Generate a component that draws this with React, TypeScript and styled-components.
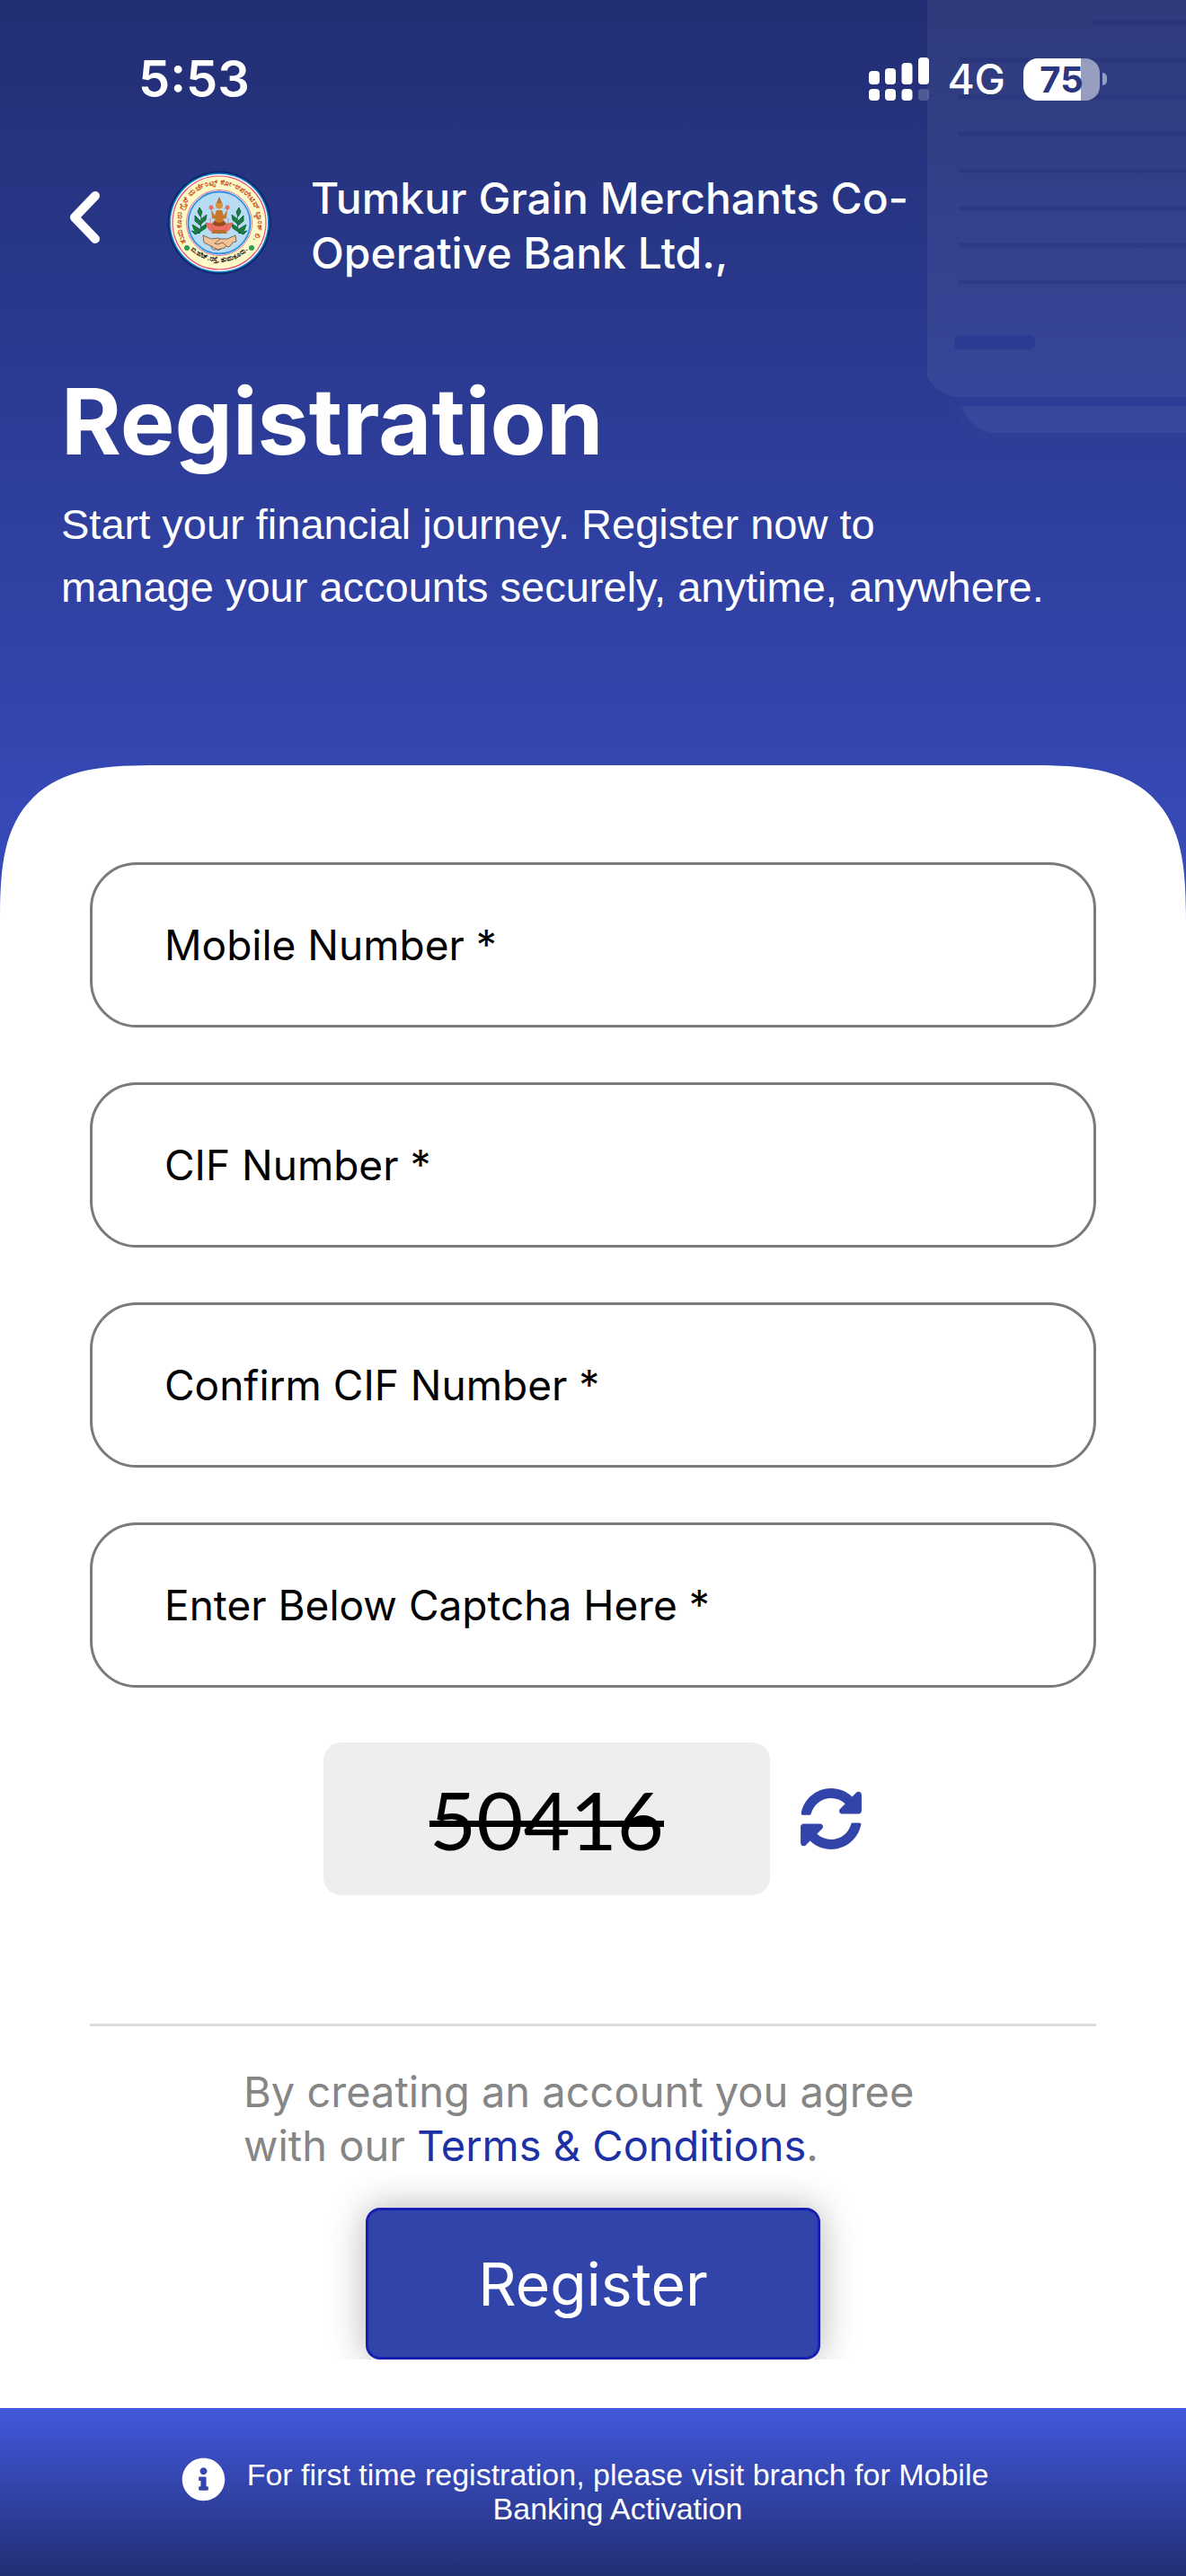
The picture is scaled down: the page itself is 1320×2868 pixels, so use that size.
import { useState } from "react";
import styled, { createGlobalStyle } from "styled-components";
import { FaInfoCircle, FaSyncAlt } from "react-icons/fa";

const GlobalStyle = createGlobalStyle`
    * {
        box-sizing: border-box;
    }
    body {
        margin: 0;
        font-family: Inter, "Noto Sans", sans-serif;
    }
`;
const Page = styled.div`
    position: relative;
    min-height: 100vh;
    display: flex;
    flex-direction: column;
    background: linear-gradient(#222e73, #4158dc 50%);
    overflow: hidden;
`;
const Papers = styled.svg`
    position: absolute;
    top: 0;
    right: 0;
    width: 288px;
    height: 500px;
`;
const StatusBar = styled.div`
    position: relative;
    height: 176px;
    padding: 0 88px 0 154px;
    display: flex;
    align-items: center;
    justify-content: space-between;
    color: white;
`;
const Time = styled.span`
    font-size: 56px;
    font-weight: 600;
`;
const StatusIcons = styled.div`
    display: flex;
    align-items: center;
    gap: 20px;
`;
const Network = styled.span`
    font-size: 46px;
    font-weight: 500;
`;
const Battery = styled.div`
    display: flex;
    align-items: center;
    gap: 3px;
`;
const BatteryBody = styled.div<{ $level: number }>`
    width: 85px;
    height: 47px;
    border-radius: 16px;
    background: linear-gradient(90deg, white ${(props) => props.$level}%, rgba(255, 255, 255, 0.5) ${(props) => props.$level}%);
    color: #2b377e;
    font-size: 40px;
    font-weight: 700;
    line-height: 47px;
    text-align: center;
`;
const BatteryTip = styled.div`
    width: 5px;
    height: 14px;
    border-radius: 0 7px 7px 0;
    background: rgba(255, 255, 255, 0.5);
`;
const Header = styled.header`
    position: relative;
    display: flex;
    align-items: flex-start;
    padding: 14px 68px 0;
`;
const BackButton = styled.button`
    width: 52px;
    height: 104px;
    padding: 0;
    border: none;
    background: none;
    color: white;
    display: flex;
    align-items: center;
    justify-content: center;
`;
const Logo = styled.svg`
    width: 116px;
    height: 116px;
    margin: 0 44px 0 66px;
    flex-shrink: 0;
`;
const BankName = styled.p`
    max-width: 700px;
    margin: 0;
    color: white;
    font-size: 48px;
    font-weight: 500;
    line-height: 61px;
`;
const Intro = styled.section`
    position: relative;
    padding: 93px 68px 163px;
    color: white;
`;
const Title = styled.h1`
    margin: 0 0 16px;
    font-size: 102px;
    font-weight: 700;
    line-height: 128px;
`;
const Subtitle = styled.p`
    max-width: 1120px;
    margin: 0;
    font-family: "Liberation Sans", Arial, sans-serif;
    font-size: 47px;
    line-height: 70px;
`;
const Card = styled.main`
    position: relative;
    flex: 1;
    padding: 108px 100px 54px;
    background: white;
    border-radius: 116px 116px 0 0;
    @supports (corner-shape: squircle) {
        border-radius: 178px 178px 0 0;
        corner-shape: superellipse(1.6);
    }
`;
const Form = styled.form`
    display: flex;
    flex-direction: column;
    gap: 61px;
`;
const Field = styled.div`
    display: grid;
    align-items: center;
`;
const Label = styled.label<{ $hidden: boolean }>`
    grid-area: 1 / 1;
    justify-self: start;
    z-index: 1;
    padding-left: 83px;
    color: black;
    font-size: 46px;
    line-height: 60px;
    pointer-events: none;
    opacity: ${(props) => (props.$hidden ? 0 : 1)};
`;
const Input = styled.input`
    grid-area: 1 / 1;
    width: 100%;
    height: 184px;
    padding: 0 80px;
    border: 3px solid #7a7a7a;
    border-radius: 52px;
    background: white;
    color: black;
    font-family: inherit;
    font-size: 46px;
`;
const CaptchaRow = styled.div`
    display: flex;
    align-items: center;
    justify-content: center;
    gap: 33px;
`;
const Captcha = styled.output`
    width: 497px;
    height: 170px;
    border-radius: 20px;
    background: #eeeeee;
    color: black;
    font-family: Lato, sans-serif;
    font-size: 90px;
    line-height: 170px;
    text-align: center;
    text-decoration: line-through;
    text-decoration-thickness: 7px;
`;
const RefreshButton = styled.button`
    display: flex;
    padding: 0;
    border: none;
    background: none;
    color: #3144a9;
    font-size: 70px;
`;
const Agreement = styled.div`
    display: flex;
    flex-direction: column;
    align-items: center;
    margin-top: 82px;
    padding-top: 43px;
    border-top: 3px solid #dcdcdc;
`;
const Terms = styled.p`
    width: 778px;
    margin: 0 0 39px;
    color: #868686;
    font-size: 47px;
    line-height: 60px;
`;
const TermsLink = styled.a`
    color: #1c31a5;
    text-decoration: none;
`;
const RegisterButton = styled.button`
    width: 506px;
    height: 169px;
    border: 3px solid #181eb0;
    border-radius: 16px;
    background: #3144a9;
    box-shadow: 0 0 40px rgba(0, 0, 0, 0.3);
    clip-path: inset(-40px -40px 0);
    color: white;
    font-family: inherit;
    font-size: 66px;
`;
const Notice = styled.footer`
    position: relative;
    display: flex;
    align-items: flex-start;
    justify-content: center;
    gap: 22px;
    padding: 55px 80px 56px 64px;
    background: linear-gradient(#4158dc, #222e73);
    color: white;
    font-size: 49px;
`;
const NoticeText = styled.p`
    max-width: 830px;
    margin: 0;
    font-family: "Liberation Sans", Arial, sans-serif;
    font-size: 34px;
    line-height: 38px;
    text-align: center;
`;

const fields = [
    { id: "mobile", label: "Mobile Number *" },
    { id: "cif", label: "CIF Number *" },
    { id: "confirmCif", label: "Confirm CIF Number *" },
    { id: "captcha", label: "Enter Below Captcha Here *" },
];

function SignalIcon() {
    return (
        <svg width="67" height="48" viewBox="0 0 67 48" fill="white" aria-hidden="true">
            <rect x="0" y="15" width="12" height="15" rx="4" />
            <rect x="18" y="12" width="12" height="18" rx="4" />
            <rect x="36.500" y="6" width="12" height="24" rx="4" />
            <rect x="55" y="0" width="12" height="30" rx="4" />
            <rect x="0" y="35" width="12" height="13" rx="4" />
            <rect x="18" y="35" width="12" height="13" rx="4" />
            <rect x="36.500" y="35" width="12" height="13" rx="4" />
            <rect x="55" y="35" width="12" height="13" rx="4" opacity="0.2" />
        </svg>
    );
}

function BackgroundPapers() {
    return (
        <Papers viewBox="0 0 288 500" aria-hidden="true">
            <path d="M28 450H288V492H72Q40 490 28 450Z" fill="#fff" opacity="0.012" />
            <path d="M38 452H288V482H74Q50 480 38 452Z" fill="#fff" opacity="0.05" />
            <path d="M0 0H288V442H34Q12 440 0 420Z" fill="#fff" opacity="0.06" />
            <g stroke="#1c2a78" strokeWidth="5" opacity="0.3">
                <path d="M184 25H288" />
                {[67, 108, 149, 190, 232, 273, 314].map((y) => (
                    <path key={y} d={`M35 ${y}H288`} />
                ))}
            </g>
            <rect x="30" y="373" width="90" height="16" rx="6" fill="#1f3190" opacity="0.45" />
        </Papers>
    );
}

function BankLogo() {
    return (
        <Logo viewBox="0 0 116 116" role="img" aria-label="Bank emblem">
            <defs>
                <path id="arcTop" d="M20.500 78A42.500 42.500 0 1 1 95.500 78" />
                <path id="arcBottom" d="M24 86A45 45 0 0 0 92 86" />
            </defs>
            <circle cx="58" cy="58" r="57.500" fill="#0a2a66" />
            <circle cx="58" cy="58" r="55.500" fill="#1d86d8" />
            <circle cx="58" cy="58" r="54" fill="#fff" />
            <circle cx="58" cy="58" r="52" fill="#fdf9c8" stroke="#e2506c" strokeWidth="1.200" />
            <circle cx="58" cy="58" r="36.500" fill="#fff" stroke="#e2708c" strokeWidth="1" />
            <circle cx="58" cy="58" r="34.500" fill="#b9dcf5" stroke="#2c8fe0" strokeWidth="1.800" />
            <text fontSize="8.500" fontWeight="700" fill="#c8501e">
                <textPath href="#arcTop" startOffset="50%" textAnchor="middle">
                    ತುಮಕೂರು ಗ್ರೈನ್ ಮರ್ಚೆಂಟ್ಸ್ ಕೋ-ಆಪರೇಟಿವ್ ಬ್ಯಾಂಕ್ ಲಿ.,
                </textPath>
            </text>
            <text fontSize="8" fontWeight="700" fill="#222">
                <textPath href="#arcBottom" startOffset="50%" textAnchor="middle">
                    ಬಿ.ಹೆಚ್.ರಸ್ತೆ, ತುಮಕೂರು.
                </textPath>
            </text>
            <g fill="#2f9a5a">
                <circle cx="22" cy="86" r="3" />
                <circle cx="94" cy="86" r="3" />
            </g>
            {/* crops on both sides of the lotus */}
            <g stroke="#12693a" strokeWidth="1" fill="#1c7a45">
                <path d="M36 70Q40 54 36 42" fill="none" />
                <path d="M80 70Q76 54 80 42" fill="none" />
                <path d="M36 41l3 5-2 5-3-5zM38 54l6-5-1 6-5 4zM37 56l-6-6 0 6 6 5zM38 63l6-4-1 5-6 4zM36 65l-8-5 2 6 6 4zM27 67l9 2-5 2z" />
                <path d="M80 41l-3 5 2 5 3-5zM78 54l-6-5 1 6 5 4zM79 56l6-6 0 6-6 5zM78 63l-6-4 1 5 6 4zM80 65l8-5-2 6-6 4zM89 67l-9 2 5 2z" />
            </g>
            <g fill="#ef6f63" stroke="#d9483c" strokeWidth="0.500">
                <path d="M43 58Q46 70 58 70Q70 70 73 58Q66 58 64 63Q62 56 58 55Q54 56 52 63Q50 58 43 58Z" />
                <path d="M48 53Q48 64 54 68M68 53Q68 64 62 68" fill="none" />
                <circle cx="49" cy="41" r="2.200" />
                <circle cx="67" cy="41" r="2.200" />
            </g>
            <path d="M49 70h18l-3-4H52z" fill="#b5702c" />
            <path d="M49 43l4 7 2-6h6l2 6 4-7-1 10-4 1 5 6H49l5-6-4-1z" fill="#c8762c" />
            <circle cx="58" cy="38.500" r="4" fill="#d8913c" />
            <path d="M55 36l3-7 3 7z" fill="#b5702c" />
            <path d="M53 56q5 4 10 0l3 4q-8 4-16 0z" fill="#9c4a1c" />
            <g fill="#f0c498" stroke="#6b4a34" strokeWidth="0.800">
                <path d="M40 72l9 4 8-1 10 6-3 5-8 2-7-4-8-4z" />
                <path d="M76 72l-9 4-8 0-6 5 3 1 6-2 5 5 3-1 3-4 4-1z" />
                <path d="M49 84q1 5 5 4M54 87q3 3 6 0" fill="none" />
            </g>
        </Logo>
    );
}

function App() {
    const [values, setValues] = useState<Record<string, string>>({});
    return (
        <>
            <GlobalStyle />
            <Page>
                <BackgroundPapers />
                <StatusBar>
                    <Time>5:53</Time>
                    <StatusIcons>
                        <SignalIcon />
                        <Network>4G</Network>
                        <Battery>
                            <BatteryBody $level={75}>75</BatteryBody>
                            <BatteryTip />
                        </Battery>
                    </StatusIcons>
                </StatusBar>
                <Header>
                    <BackButton type="button" aria-label="Back">
                        <svg width="36" height="60" viewBox="0 0 36 60" fill="none" aria-hidden="true">
                            <path d="M30 6L7 30L30 54" stroke="currentColor" strokeWidth="10" strokeLinecap="round" strokeLinejoin="round" />
                        </svg>
                    </BackButton>
                    <BankLogo />
                    <BankName>Tumkur Grain Merchants Co-Operative Bank Ltd.,</BankName>
                </Header>
                <Intro>
                    <Title>Registration</Title>
                    <Subtitle>
                        Start your financial journey. Register now to
                        <br />
                        manage your accounts securely, anytime, anywhere.
                    </Subtitle>
                </Intro>
                <Card>
                    <Form onSubmit={(event) => event.preventDefault()}>
                        {fields.map(({ id, label }) => (
                            <Field key={id}>
                                <Label htmlFor={id} $hidden={Boolean(values[id])}>
                                    {label}
                                </Label>
                                <Input
                                    id={id}
                                    value={values[id] || ""}
                                    onChange={(event) => setValues({ ...values, [id]: event.target.value })}
                                />
                            </Field>
                        ))}
                        <CaptchaRow>
                            <Captcha>50416</Captcha>
                            <RefreshButton type="button" aria-label="Refresh captcha">
                                <FaSyncAlt />
                            </RefreshButton>
                        </CaptchaRow>
                        <Agreement>
                            <Terms>
                                By creating an account you agree with our <TermsLink href="#terms">Terms &amp; Conditions</TermsLink>.
                            </Terms>
                            <RegisterButton type="submit">Register</RegisterButton>
                        </Agreement>
                    </Form>
                </Card>
                <Notice>
                    <FaInfoCircle />
                    <NoticeText>For first time registration, please visit branch for Mobile Banking Activation</NoticeText>
                </Notice>
            </Page>
        </>
    );
}

export default App;
